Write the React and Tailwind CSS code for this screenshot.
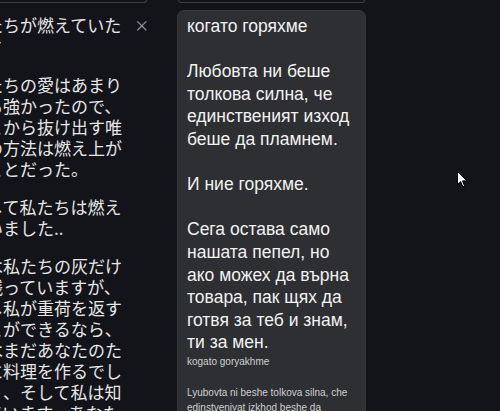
import React from 'react';

const jaTitle = ['私たちが燃えていた', 'とき'];

const jaParas = [
  ['私たちの愛はあまり', 'にも強かったので、', 'そこから抜け出す唯', '一の方法は燃え上が', 'ることだった。'],
  ['そして私たちは燃え', 'ていました..'],
  [
    '今は私たちの灰だけ',
    'が残っていますが、',
    'もし私が重荷を返す',
    'ことができるなら、',
    '私はまだあなたのた',
    'めに料理を作るでし',
    'ょう、そして私は知',
    'っています、あなた',
    'も同じだと。',
  ],
];

const bgLines = [
  'когато горяхме',
  '',
  'Любовта ни беше',
  'толкова силна, че',
  'единственият изход',
  'беше да пламнем.',
  '',
  'И ние горяхме.',
  '',
  'Сега остава само',
  'нашата пепел, но',
  'ако можех да върна',
  'товара, пак щях да',
  'готвя за теб и знам,',
  'ти за мен.',
];

const latinLines = [
  'kogato goryakhme',
  '',
  'Lyubovta ni beshe tolkova silna, che',
  'edinstveniyat izkhod beshe da',
  'plamnem.',
];

const TopEdge = () => (
  <div className="h-[3px] border-x border-b border-[#3d3e43] rounded-b-[6px]" />
);

const App = () => {
  return (
    <div className="relative w-[500px] h-[411px] overflow-hidden bg-[#131419] font-['Liberation_Sans',Arial,sans-serif]">
      <div className="flex gap-[30px] -ml-[31px]">
        {/* Japanese translation column */}
        <div className="flex-none w-[178px]">
          <TopEdge />
          <div className="pt-[12px] font-['Noto_Sans_CJK_JP',sans-serif] text-[17px] text-[#e6e6e6]">
            <div className="flex items-start gap-[13px]">
              <div className="w-[153px] leading-[19px]">
                {jaTitle.map((l, i) => (
                  <div key={i} className="whitespace-nowrap">{l}</div>
                ))}
              </div>
              <button className="mt-[1px] text-[#9ca3af] text-[15px] leading-[17px]">×</button>
            </div>
            <div className="mt-[21px] leading-[21px]">
              {jaParas.map((p, i) => (
                <div key={i} className="mb-[17px]">
                  {p.map((l, j) => (
                    <div key={j} className="whitespace-nowrap">{l}</div>
                  ))}
                </div>
              ))}
            </div>
          </div>
        </div>

        {/* Bulgarian card */}
        <div className="flex-none w-[189px]">
          <div className="mx-[1px]">
            <TopEdge />
          </div>
          <div className="mt-[7px] h-[420px] rounded-t-[7px] border border-[#37383c] bg-[#2e2f33] px-[9px] pt-[4px]">
            <div className="text-[17.5px] leading-[22.6px] text-[#f2f2f2]">
              {bgLines.map((l, i) =>
                l ? (
                  <div key={i} className="whitespace-nowrap">{l}</div>
                ) : (
                  <div key={i} className="h-[22.6px]" />
                )
              )}
            </div>
            <div className="text-[10px] leading-[15.5px] text-[#cfcfcf]">
              {latinLines.map((l, i) =>
                l ? (
                  <div key={i} className="whitespace-nowrap">{l}</div>
                ) : (
                  <div key={i} className="h-[15.5px]" />
                )
              )}
            </div>
          </div>
        </div>
      </div>

      {/* mouse pointer */}
      <svg className="absolute left-[457px] top-[171px]" width="11" height="17" viewBox="0 0 11 17">
        <path d="M0.5 0.5 L0.5 13.5 L3.6 10.6 L5.8 15.6 L7.6 14.8 L5.5 9.9 L9.8 9.9 Z" fill="#ffffff" stroke="#000000" strokeWidth="1" strokeLinejoin="round" />
      </svg>
    </div>
  );
};

export default App;
